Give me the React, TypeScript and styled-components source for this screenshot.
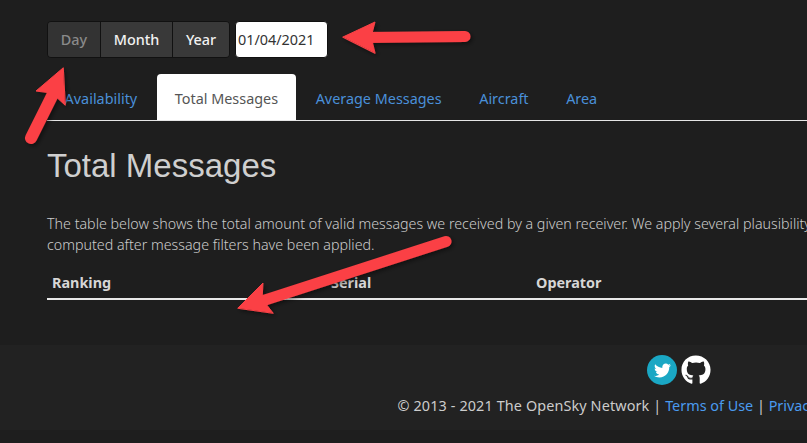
import React from 'react'
import styled, { createGlobalStyle } from 'styled-components'
import { FaGithub, FaTwitter } from 'react-icons/fa'

const GlobalStyle = createGlobalStyle`
  html, body {
    margin: 0;
    width: 807px;
    height: 443px;
    overflow: hidden;
    background: #1e1e1e;
  }
`

const tabs = ['Availability', 'Total Messages', 'Average Messages', 'Aircraft', 'Area']

const App: React.FC = () => (
  <Page>
    <GlobalStyle />
    <Main>
      <Toolbar>
        <ButtonGroup>
          <RangeButton $disabled>Day</RangeButton>
          <RangeButton>Month</RangeButton>
          <RangeButton>Year</RangeButton>
        </ButtonGroup>
        <DateInput type="text" defaultValue="01/04/2021" />
      </Toolbar>
      <TabBar>
        {tabs.map(tab => (
          <Tab key={tab} $active={tab === 'Total Messages'}>
            {tab}
          </Tab>
        ))}
      </TabBar>
      <Heading>Total Messages</Heading>
      <Description>
        The table below shows the total amount of valid messages we received by a given receiver. We apply several plausibility checks to
        <br />
        computed after message filters have been applied.
      </Description>
      <TableHead>
        <span>Ranking</span>
        <span>Serial</span>
        <span>Operator</span>
      </TableHead>
    </Main>
    <Footer>
      <SocialRow>
        <TwitterBadge>
          <FaTwitter size={17} />
        </TwitterBadge>
        <GithubBadge>
          <FaGithub size={30} />
        </GithubBadge>
      </SocialRow>
      <Copyright>
        <Owner>© 2013 - 2021 The OpenSky Network | </Owner>
        <FooterLink>Terms of Use</FooterLink> | <FooterLink>Privacy Policy</FooterLink>
      </Copyright>
    </Footer>
    <Annotations width="807" height="443" viewBox="0 0 807 443">
      <defs>
        <filter id="arrow-shadow" x="-20%" y="-20%" width="140%" height="140%">
          <feDropShadow dx="2" dy="2" stdDeviation="2" floodColor="#000" floodOpacity="0.45" />
        </filter>
      </defs>
      <g fill="#fb4145" stroke="#fb4145" strokeLinecap="round" filter="url(#arrow-shadow)">
        <path d="M465 36.5 L365 37.5" strokeWidth="11" fill="none" />
        <path d="M343 37 L375 22 L371 37 L375 53 Z" strokeWidth="1" />
        <path d="M31 138 L54 92" strokeWidth="12" fill="none" />
        <path d="M63 68 L36 91 L52 93 L65 105 Z" strokeWidth="1" />
        <path d="M446 241.5 L262 301" strokeWidth="11" fill="none" />
        <path d="M238 308 L263 283 L262 299 L273 313 Z" strokeWidth="1" />
      </g>
    </Annotations>
  </Page>
)

export default App

const Page = styled.div`
  position: relative;
  width: 807px;
  height: 443px;
  overflow: hidden;
  background: #1e1e1e;
  font-family: 'Noto Sans', 'Open Sans', sans-serif;
`

const Main = styled.main`
  width: 1300px;
  height: 345px;
  padding: 21px 0 0 47px;
  box-sizing: border-box;
`

const Toolbar = styled.div`
  display: flex;
  align-items: stretch;
  gap: 5px;
  height: 37px;
`

const ButtonGroup = styled.div`
  display: flex;
  border: 1px solid #111;
  border-radius: 4px;
  overflow: hidden;
`

const RangeButton = styled.div<{ $disabled?: boolean }>`
  display: flex;
  align-items: center;
  padding: 0 12.8px;
  background: ${p => (p.$disabled ? '#333333' : '#393939')};
  color: ${p => (p.$disabled ? '#8a8a8a' : '#f2f2f2')};
  font-size: 14.4px;
  font-weight: 500;

  & + & {
    border-left: 1px solid #111;
  }
`

const DateInput = styled.input`
  width: 93px;
  padding: 0 2px;
  box-sizing: border-box;
  border: 1px solid #111;
  border-radius: 4px;
  background: #fff;
  color: #333;
  font-family: inherit;
  font-size: 14.4px;
  outline: none;
`

const TabBar = styled.nav`
  display: flex;
  align-items: flex-end;
  height: 46px;
  margin-top: 16px;
  border-bottom: 1px solid #e6e6e6;
`

const Tab = styled.div<{ $active?: boolean }>`
  display: flex;
  align-items: center;
  height: 46px;
  padding: 2px 17.6px 0;
  box-sizing: border-box;
  margin-right: 2.4px;
  border-radius: 4px 4px 0 0;
  background: ${p => (p.$active ? '#fff' : 'transparent')};
  color: ${p => (p.$active ? '#555' : '#4a90d9')};
  font-size: 14.4px;
`

const Heading = styled.h1`
  margin: 27px 0 0;
  font-family: 'Liberation Sans', Arial, sans-serif;
  font-size: 33px;
  font-weight: 400;
  line-height: 36px;
  color: #cfcfcf;
`

const Description = styled.p`
  margin: 29px 0 0;
  font-size: 14.25px;
  line-height: 21px;
  font-weight: 300;
  color: #cccccc;
  white-space: nowrap;
`

const TableHead = styled.div`
  display: grid;
  grid-template-columns: 279px 205px 1fr;
  margin-top: 17px;
  padding: 0 5px 4px;
  border-bottom: 2px solid #e8e8e8;
  font-size: 14.4px;
  line-height: 22px;
  font-weight: 700;
  color: #d6d6d6;
`

const Footer = styled.footer`
  display: flex;
  flex-direction: column;
  align-items: center;
  width: 1358px;
  height: 85px;
  padding-top: 10px;
  box-sizing: border-box;
  background: #222222;
`

const SocialRow = styled.div`
  display: flex;
  gap: 4px;
`

const TwitterBadge = styled.span`
  display: flex;
  align-items: center;
  justify-content: center;
  width: 30px;
  height: 30px;
  border-radius: 50%;
  background: #1aa7c4;
  color: #fff;
`

const GithubBadge = styled.span`
  display: flex;
  width: 30px;
  height: 30px;
  color: #fff;
`

const Copyright = styled.div`
  margin-top: 10px;
  padding-right: 101px;
  font-size: 14.4px;
  line-height: 22px;
  color: #cccccc;
  white-space: pre;
`

const Owner = styled.span`
  letter-spacing: 0.12px;
`

const FooterLink = styled.span`
  color: #4a9bef;
`

const Annotations = styled.svg`
  position: absolute;
  top: 0;
  left: 0;
  pointer-events: none;
`
